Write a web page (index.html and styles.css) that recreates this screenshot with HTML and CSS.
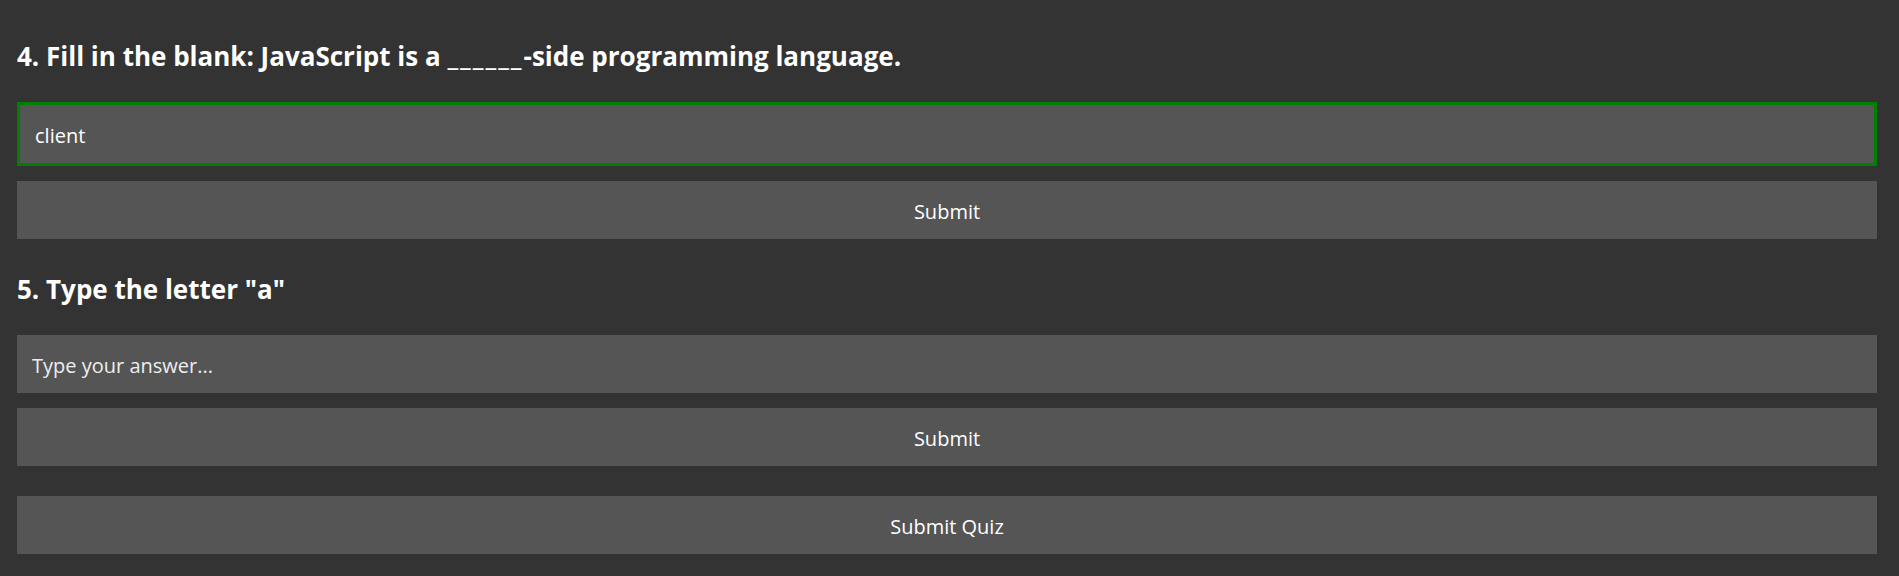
FILE: index.html
```html
<!DOCTYPE html>
<html lang="en">
<head>
<meta charset="utf-8">
<title>Quiz</title>
<link rel="stylesheet" href="styles.css">
</head>
<body>
<div class="quiz">
  <div class="question">
    <h3 class="question-title">4. Fill in the blank: JavaScript is a <span class="blank">______</span>-side programming language.</h3>
    <input class="answer correct" type="text" value="client">
    <button class="btn">Submit</button>
  </div>
  <div class="question">
    <h3 class="question-title">5. Type the letter "a"</h3>
    <input class="answer" type="text" placeholder="Type your answer...">
    <button class="btn">Submit</button>
  </div>
  <button class="btn submit-quiz">Submit Quiz</button>
</div>
</body>
</html>
```

FILE: styles.css
```css
html, body {
  margin: 0;
  padding: 0;
  background: #333333;
  color: #ffffff;
  font-family: "Open Sans", "Noto Sans", sans-serif;
}

.quiz {
  padding: 6px 22px 0 17px;
  display: flex;
  flex-direction: column;
}

.question {
  display: flex;
  flex-direction: column;
  gap: 15px;
}

.question-title {
  font-size: 26px;
  line-height: 32px;
  font-weight: 700;
  margin: 34px 0 15px;
}

.blank {
  letter-spacing: 2px;
}

.answer {
  box-sizing: content-box;
  height: 56px;
  padding: 2px 15px 0;
  border: none;
  background: #555555;
  color: #ffffff;
  font-family: inherit;
  font-size: 20px;
  outline: none;
}

.answer::placeholder {
  color: #eeeeee;
  opacity: 1;
}

.answer.correct {
  border: 3px solid #008000;
}

.btn {
  height: 58px;
  padding: 2px 0 0;
  border: none;
  background: #555555;
  color: #ffffff;
  font-family: inherit;
  font-size: 20px;
  cursor: pointer;
}

.submit-quiz {
  margin-top: 30px;
}
```
